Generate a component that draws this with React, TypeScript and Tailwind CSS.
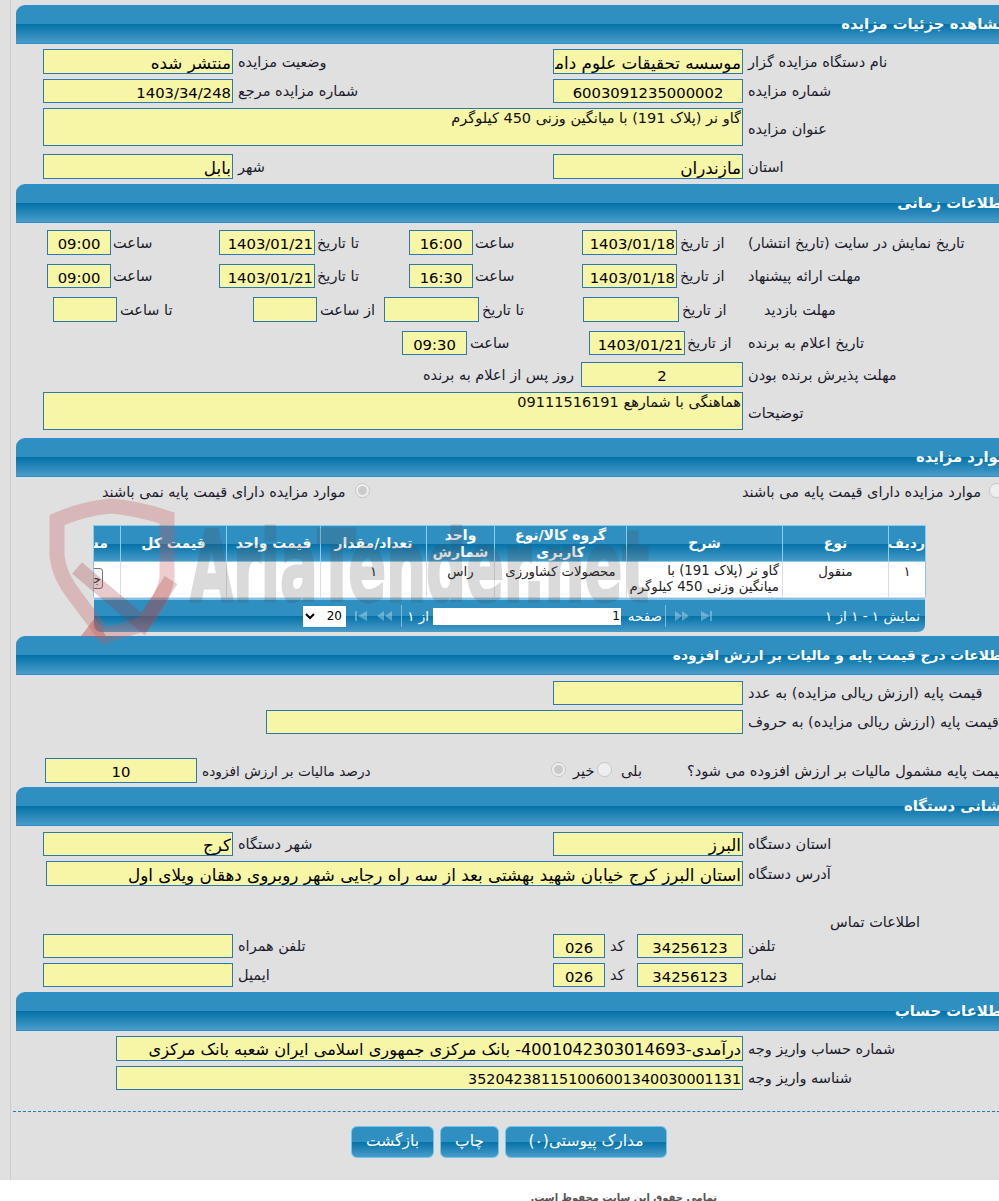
import React from 'react';

const barBg = "bg-[linear-gradient(180deg,#2f8fc0_0%,#2f8fc0_49%,#0472a9_50%,#4a9cc8_100%)]";

function Bar({ title, small = false, className = "" }: { title: string; small?: boolean; className?: string }) {
  return (
    <div className={`ml-[5px] w-[992px] h-[39px] rounded-tl-[9px] border-t border-b border-[#2b90d0] flex items-center justify-end ${barBg} ${className}`}>
      <h2 dir="rtl" className={`font-bold text-white whitespace-nowrap mr-[1px] ${small ? "text-[13.8px]" : "text-[14.8px]"}`}>{title}</h2>
    </div>
  );
}

function Inp({ value = "", fa = false, size = "", className = "" }: { value?: string; fa?: boolean; size?: string; className?: string }) {
  return (
    <input
      readOnly
      dir="rtl"
      value={value}
      className={`h-full shrink-0 bg-[#f7f5a6] border border-[#2a7ab0] px-[1px] pt-[2px] text-black outline-none ${size || (fa ? "text-[16.8px]" : "text-[14.8px]")} ${className}`}
    />
  );
}

function Lbl({ children, size = "text-[14.5px]", className = "" }: { children?: React.ReactNode; size?: string; className?: string }) {
  return (
    <div dir="rtl" className={`shrink-0 pt-[2px] text-left whitespace-nowrap text-[#1c1c2c] ${size} ${className}`}>
      {children}
    </div>
  );
}

function Radio({ checked = false, className = "" }: { checked?: boolean; className?: string }) {
  return <input type="radio" disabled checked={checked} readOnly className={`w-[15px] h-[15px] m-0 -mt-[3px] shrink-0 ${className}`} />;
}

const cols = [
  { w: "w-[27px]", t: "مشاهده" },
  { w: "w-[106px]", t: "قیمت کل" },
  { w: "w-[94px]", t: "قیمت واحد" },
  { w: "w-[106px]", t: "تعداد/مقدار" },
  { w: "w-[68px]", t: "واحد شمارش" },
  { w: "w-[132px]", t: "گروه کالا/نوع کاربری" },
  { w: "w-[156px]", t: "شرح" },
  { w: "w-[106px]", t: "نوع" },
  { w: "w-[37px]", t: "ردیف" },
].reverse();

function Grid() {
  return (
    <div className="ml-[82px] w-[832px] h-[106px] relative">
      <table dir="rtl" className="w-full table-fixed border-collapse">
        <colgroup>
          {cols.map((c) => (
            <col key={c.t} className={c.w} />
          ))}
        </colgroup>
        <thead>
          <tr className={`h-[36px] ${barBg}`}>
            {cols.map((c) => (
              <th key={c.t} className="border border-[#86cdf0] p-0 text-center text-[14px] leading-[17px] font-bold text-white overflow-hidden whitespace-normal">
                {c.t === "مشاهده" ? <span className="block w-[60px] text-right pr-[12px] whitespace-nowrap">{c.t}</span> : c.t}
              </th>
            ))}
          </tr>
        </thead>
        <tbody>
          <tr className="h-[36px] bg-white align-top text-[13.3px] leading-[16px] text-[#222]">
            <td className="border border-[#ddd] border-r-[#8cc4e4] text-center pt-[2px]">۱</td>
            <td className="border border-[#ddd] text-center pt-[2px]">منقول</td>
            <td className="border border-[#ddd] text-right pr-[3px] pt-[1px] whitespace-nowrap">گاو نر (پلاک 191) با<br />میانگین وزنی 450 کیلوگرم</td>
            <td className="border border-[#ddd] text-center pt-[2px]">محصولات کشاورزی</td>
            <td className="border border-[#ddd] text-center pt-[2px]">راس</td>
            <td className="border border-[#ddd] text-center pt-[2px]">۱</td>
            <td className="border border-[#ddd]"></td>
            <td className="border border-[#ddd]"></td>
            <td className="border border-[#ddd] border-l-[#8cc4e4] overflow-hidden">
              <button className="block w-[50px] h-[21px] mr-[17px] mt-[6px] border border-[#777] rounded-[3px] bg-[#f4f4f4] text-[12px] text-right pr-[1px] whitespace-nowrap">جزئیات</button>
            </td>
          </tr>
        </tbody>
      </table>
      <div className={`ml-[1px] h-[34px] rounded-b-[7px] border-t-[2px] border-[#7cc4ea] flex items-center text-[13.5px] text-white ${barBg}`}>
        <select dir="rtl" className="ml-[209px] w-[43px] h-[21px] bg-white text-black text-[12px] border-0 outline-none shrink-0">
          <option>20</option>
        </select>
        <svg width="38" height="12" viewBox="0 0 38 12" className="ml-[9px] shrink-0 opacity-40" fill="#cfe6f4">
          <path d="M0 1h2v10H0zM12 1v10L3 6zM29 1v10l-7-5zM37 1v10l-7-5z" />
        </svg>
        <div className="ml-[8px] w-px h-[22px] bg-[#7fb7d6] shrink-0"></div>
        <span dir="rtl" className="ml-[7px] w-[24px] pr-[4px] shrink-0 whitespace-nowrap">از ۱</span>
        <input readOnly dir="rtl" value="1" className="w-[188px] h-[17px] bg-white text-black text-[12px] px-[1px] outline-none shrink-0" />
        <span dir="rtl" className="ml-[5px] w-[36px] shrink-0 whitespace-nowrap">صفحه</span>
        <div className="ml-[3px] w-px h-[22px] bg-[#7fb7d6] shrink-0"></div>
        <svg width="38" height="12" viewBox="0 0 38 12" className="ml-[9px] shrink-0 opacity-40" fill="#cfe6f4">
          <path d="M0 1v10l7-5zM7 1v10l7-5zM26 1v10l9-5zM35 1h2v10h-2z" />
        </svg>
        <span dir="rtl" className="ml-[112px] whitespace-nowrap shrink-0">نمایش ۱ - ۱ از ۱</span>
      </div>
    </div>
  );
}

function Watermark() {
  return (
    <div className="absolute left-0 top-0 w-[999px] h-[660px] overflow-hidden pointer-events-none">
      <svg width="200" height="150" viewBox="0 0 200 150" className="absolute left-[45px] top-[496px]">
        <path d="M12 24 Q40 12 66 10 Q92 12 122 22 L122 82 Q118 104 98 128 L60 140 L30 100 Q14 80 12 60Z" fill="none" stroke="#c45a5a" strokeOpacity="0.3" strokeWidth="15" />
        <path d="M32 72 L98 128 L126 84" fill="none" stroke="#a03030" strokeOpacity="0.25" strokeWidth="15" />
        <path d="M50 122 L62 142 L36 140Z" fill="#c45a5a" fillOpacity="0.5" />
      </svg>
      <div className="absolute left-[190px] top-[512px] origin-left scale-x-[0.57] text-[98px] leading-[110px] font-bold text-[#4a4a4a] opacity-[0.2] [-webkit-text-stroke:3px_#4a4a4a] whitespace-nowrap">
        AriaTender.net
      </div>
    </div>
  );
}

export default function App() {
  return (
    <div className="relative w-[999px] h-[1201px] overflow-hidden bg-white font-['DejaVu_Sans',sans-serif]">
      <div className="w-full h-[1180px] bg-[#e0e0e0] pl-[10px]">
        <div className="h-full border-l border-[#cccccc] pt-[5px] w-[1000px]">
          <Bar title="مشاهده جزئیات مزایده" />
          <div className="mt-[5px] h-[25px] flex items-center pl-[32px]">
            <Inp fa value="منتشر شده" className="w-[190px]" />
            <Lbl className="w-[320px] pl-[5px]">وضعیت مزایده</Lbl>
            <Inp fa value="موسسه تحقیقات علوم دامی کشور" className="w-[190px]" />
            <Lbl className="pl-[5px]">نام دستگاه مزایده گزار</Lbl>
          </div>
          <div className="mt-[5px] h-[24px] flex items-center pl-[32px]">
            <Inp value="1403/34/248" className="w-[190px]" />
            <Lbl className="w-[320px] pl-[5px]">شماره مزایده مرجع</Lbl>
            <Inp value="6003091235000002" className="w-[190px] text-center" />
            <Lbl className="pl-[5px]">شماره مزایده</Lbl>
          </div>
          <div className="mt-[5px] h-[38px] flex items-center pl-[32px]">
            <textarea readOnly dir="rtl" value="گاو نر (پلاک 191) با میانگین وزنی 450 کیلوگرم" className="w-[700px] h-full resize-none bg-[#f7f5a6] border border-[#2a7ab0] px-[1px] text-[14.5px] leading-[18px] text-[#111] outline-none" />
            <Lbl className="pl-[5px] mt-[3px]">عنوان مزایده</Lbl>
          </div>
          <div className="mt-[8px] h-[25px] flex items-center pl-[32px]">
            <Inp fa value="بابل" className="w-[190px]" />
            <Lbl className="w-[320px] pl-[5px]">شهر</Lbl>
            <Inp fa value="مازندران" className="w-[190px]" />
            <Lbl className="pl-[5px]">استان</Lbl>
          </div>

          <Bar title="اطلاعات زمانی" className="mt-[5px]" />
          <div className="mt-[7px] h-[25px] flex items-center pl-[36px]">
            <Inp value="09:00" className="w-[64px] text-center" />
            <Lbl className="w-[108px] pl-[2px]">ساعت</Lbl>
            <Inp value="1403/01/21" className="w-[96px]" />
            <Lbl className="w-[94px] pl-[2px]">تا تاریخ</Lbl>
            <Inp value="16:00" className="w-[64px] text-center" />
            <Lbl className="w-[109px] pl-[2px]">ساعت</Lbl>
            <Inp value="1403/01/18" className="w-[95px]" />
            <Lbl className="w-[71px] pl-[3px]">از تاریخ</Lbl>
            <Lbl>تاریخ نمایش در سایت (تاریخ انتشار)</Lbl>
          </div>
          <div className="mt-[9px] h-[24px] flex items-center pl-[36px]">
            <Inp value="09:00" className="w-[64px] text-center" />
            <Lbl className="w-[108px] pl-[2px]">ساعت</Lbl>
            <Inp value="1403/01/21" className="w-[96px]" />
            <Lbl className="w-[94px] pl-[2px]">تا تاریخ</Lbl>
            <Inp value="16:30" className="w-[64px] text-center" />
            <Lbl className="w-[109px] pl-[2px]">ساعت</Lbl>
            <Inp value="1403/01/18" className="w-[95px]" />
            <Lbl className="w-[71px] pl-[3px]">از تاریخ</Lbl>
            <Lbl>مهلت ارائه پیشنهاد</Lbl>
          </div>
          <div className="mt-[9px] h-[25px] flex items-center pl-[42px]">
            <Inp className="w-[64px]" />
            <Lbl className="w-[136px] pl-[3px]">تا ساعت</Lbl>
            <Inp className="w-[64px]" />
            <Lbl className="w-[67px] pl-[3px]">از ساعت</Lbl>
            <Inp className="w-[95px]" />
            <Lbl className="w-[104px] pl-[3px]">تا تاریخ</Lbl>
            <Inp className="w-[96px]" />
            <Lbl className="w-[81px] pl-[3px]">از تاریخ</Lbl>
            <Lbl className="pl-[4px]">مهلت بازدید</Lbl>
          </div>
          <div className="mt-[9px] h-[24px] flex items-center pl-[391px]">
            <Inp value="09:30" className="w-[65px] text-center" />
            <Lbl className="w-[122px] pl-[3px]">ساعت</Lbl>
            <Inp value="1403/01/21" className="w-[96px]" />
            <Lbl className="w-[63px] pl-[2px]">از تاریخ</Lbl>
            <Lbl>تاریخ اعلام به برنده</Lbl>
          </div>
          <div className="mt-[7px] h-[25px] flex items-center pl-[412px]">
            <Lbl className="w-[158px]">روز پس از اعلام به برنده</Lbl>
            <Inp value="2" className="w-[162px] text-center" />
            <Lbl className="pl-[5px]">مهلت پذیرش برنده بودن</Lbl>
          </div>
          <div className="mt-[5px] h-[38px] flex items-center pl-[32px]">
            <textarea readOnly dir="rtl" value="هماهنگی با شمارهع 09111516191" className="w-[700px] h-full resize-none bg-[#f7f5a6] border border-[#2a7ab0] px-[1px] text-[14.5px] leading-[18px] text-[#111] outline-none" />
            <Lbl className="pl-[5px] mt-[3px]">توضیحات</Lbl>
          </div>

          <Bar title="موارد مزایده" className="mt-[8px]" />
          <div className="mt-[5px] h-[20px] flex items-center pl-[91px]">
            <Lbl className="w-[253px]">موارد مزایده دارای قیمت پایه نمی باشند</Lbl>
            <Radio checked />
            <Lbl className="w-[619px] pl-[372px]">موارد مزایده دارای قیمت پایه می باشند</Lbl>
            <Radio />
          </div>
          <div className="mt-[23px]">
            <Grid />
          </div>

          <Bar small title="اطلاعات درج قیمت پایه و مالیات بر ارزش افزوده" className="mt-[5px]" />
          <div className="mt-[6px] h-[24px] flex items-center pl-[542px]">
            <Inp className="w-[190px]" />
            <Lbl className="pl-[5px]">قیمت پایه (ارزش ریالی مزایده) به عدد</Lbl>
          </div>
          <div className="mt-[5px] h-[24px] flex items-center pl-[255px]">
            <Inp className="w-[477px]" />
            <Lbl className="pl-[5px]">قیمت پایه (ارزش ریالی مزایده) به حروف</Lbl>
          </div>
          <div className="mt-[24px] h-[25px] flex items-center pl-[34px]">
            <Inp value="10" className="w-[152px] text-center" />
            <Lbl size="text-[13.7px]" className="w-[354px] pl-[5px]">درصد مالیات بر ارزش افزوده</Lbl>
            <Radio checked />
            <Lbl className="w-[31px] pl-[7px]">خیر</Lbl>
            <Radio />
            <Lbl className="w-[75px] pl-[9px]">بلی</Lbl>
            <Lbl>قیمت پایه مشمول مالیات بر ارزش افزوده می شود؟</Lbl>
          </div>

          <Bar title="نشانی دستگاه" className="mt-[4px]" />
          <div className="mt-[6px] h-[24px] flex items-center pl-[32px]">
            <Inp fa value="کرج" className="w-[190px]" />
            <Lbl className="w-[320px] pl-[5px]">شهر دستگاه</Lbl>
            <Inp fa value="البرز" className="w-[190px]" />
            <Lbl className="pl-[5px]">استان دستگاه</Lbl>
          </div>
          <div className="mt-[5px] h-[25px] flex items-center pl-[35px]">
            <Inp fa value="استان البرز کرج خیابان شهید بهشتی بعد از سه راه رجایی شهر روبروی دهقان ویلای اول" className="w-[697px]" />
            <Lbl className="pl-[5px]">آدرس دستگاه</Lbl>
          </div>
          <div className="mt-[26px] h-[20px] flex items-center pl-[819px]">
            <Lbl>اطلاعات تماس</Lbl>
          </div>
          <div className="mt-[2px] h-[24px] flex items-center pl-[32px]">
            <Inp className="w-[190px]" />
            <Lbl className="w-[320px] pl-[5px]">تلفن همراه</Lbl>
            <Inp value="026" className="w-[52px] text-center" />
            <Lbl className="w-[32px] pl-[5px]">کد</Lbl>
            <Inp value="34256123" className="w-[106px] text-center" />
            <Lbl className="pl-[5px]">تلفن</Lbl>
          </div>
          <div className="mt-[5px] h-[24px] flex items-center pl-[32px]">
            <Inp className="w-[190px]" />
            <Lbl className="w-[320px] pl-[5px]">ایمیل</Lbl>
            <Inp value="026" className="w-[52px] text-center" />
            <Lbl className="w-[32px] pl-[5px]">کد</Lbl>
            <Inp value="34256123" className="w-[106px] text-center" />
            <Lbl className="pl-[5px]">نمابر</Lbl>
          </div>

          <Bar title="اطلاعات حساب" className="mt-[5px]" />
          <div className="mt-[5px] h-[25px] flex items-center pl-[105px]">
            <Inp size="text-[16.2px]" value="درآمدی-4001042303014693- بانک مرکزی جمهوری اسلامی ایران شعبه بانک مرکزی" className="w-[627px]" />
            <Lbl className="pl-[5px]">شماره حساب واریز وجه</Lbl>
          </div>
          <div className="mt-[5px] h-[24px] flex items-center pl-[105px]">
            <Inp size="text-[14.3px]" value="352042381151006001340030001131" className="w-[627px]" />
            <Lbl className="pl-[5px]">شناسه واریز وجه</Lbl>
          </div>

          <div className="mt-[21px] ml-[2px] border-t border-dashed border-[#2a7ab0]"></div>
          <div className="mt-[14px] pl-[340px] flex gap-[6px]">
            <button className={`w-[83px] h-[32px] rounded-[6px] border border-[#6cc6ee] text-white text-[15.5px] ${barBg}`}>بازگشت</button>
            <button className={`w-[59px] h-[32px] rounded-[6px] border border-[#6cc6ee] text-white text-[15.5px] ${barBg}`}>چاپ</button>
            <button className={`w-[162px] h-[32px] rounded-[6px] border border-[#6cc6ee] text-white text-[15.5px] ${barBg}`}>مدارک پیوستی(۰)</button>
          </div>
        </div>
      </div>
      <footer dir="rtl" className="pr-[282px] pt-[10px] text-[10px] font-bold text-[#555]">تمامی حقوق این سایت محفوظ است.</footer>
      <Watermark />
    </div>
  );
}
